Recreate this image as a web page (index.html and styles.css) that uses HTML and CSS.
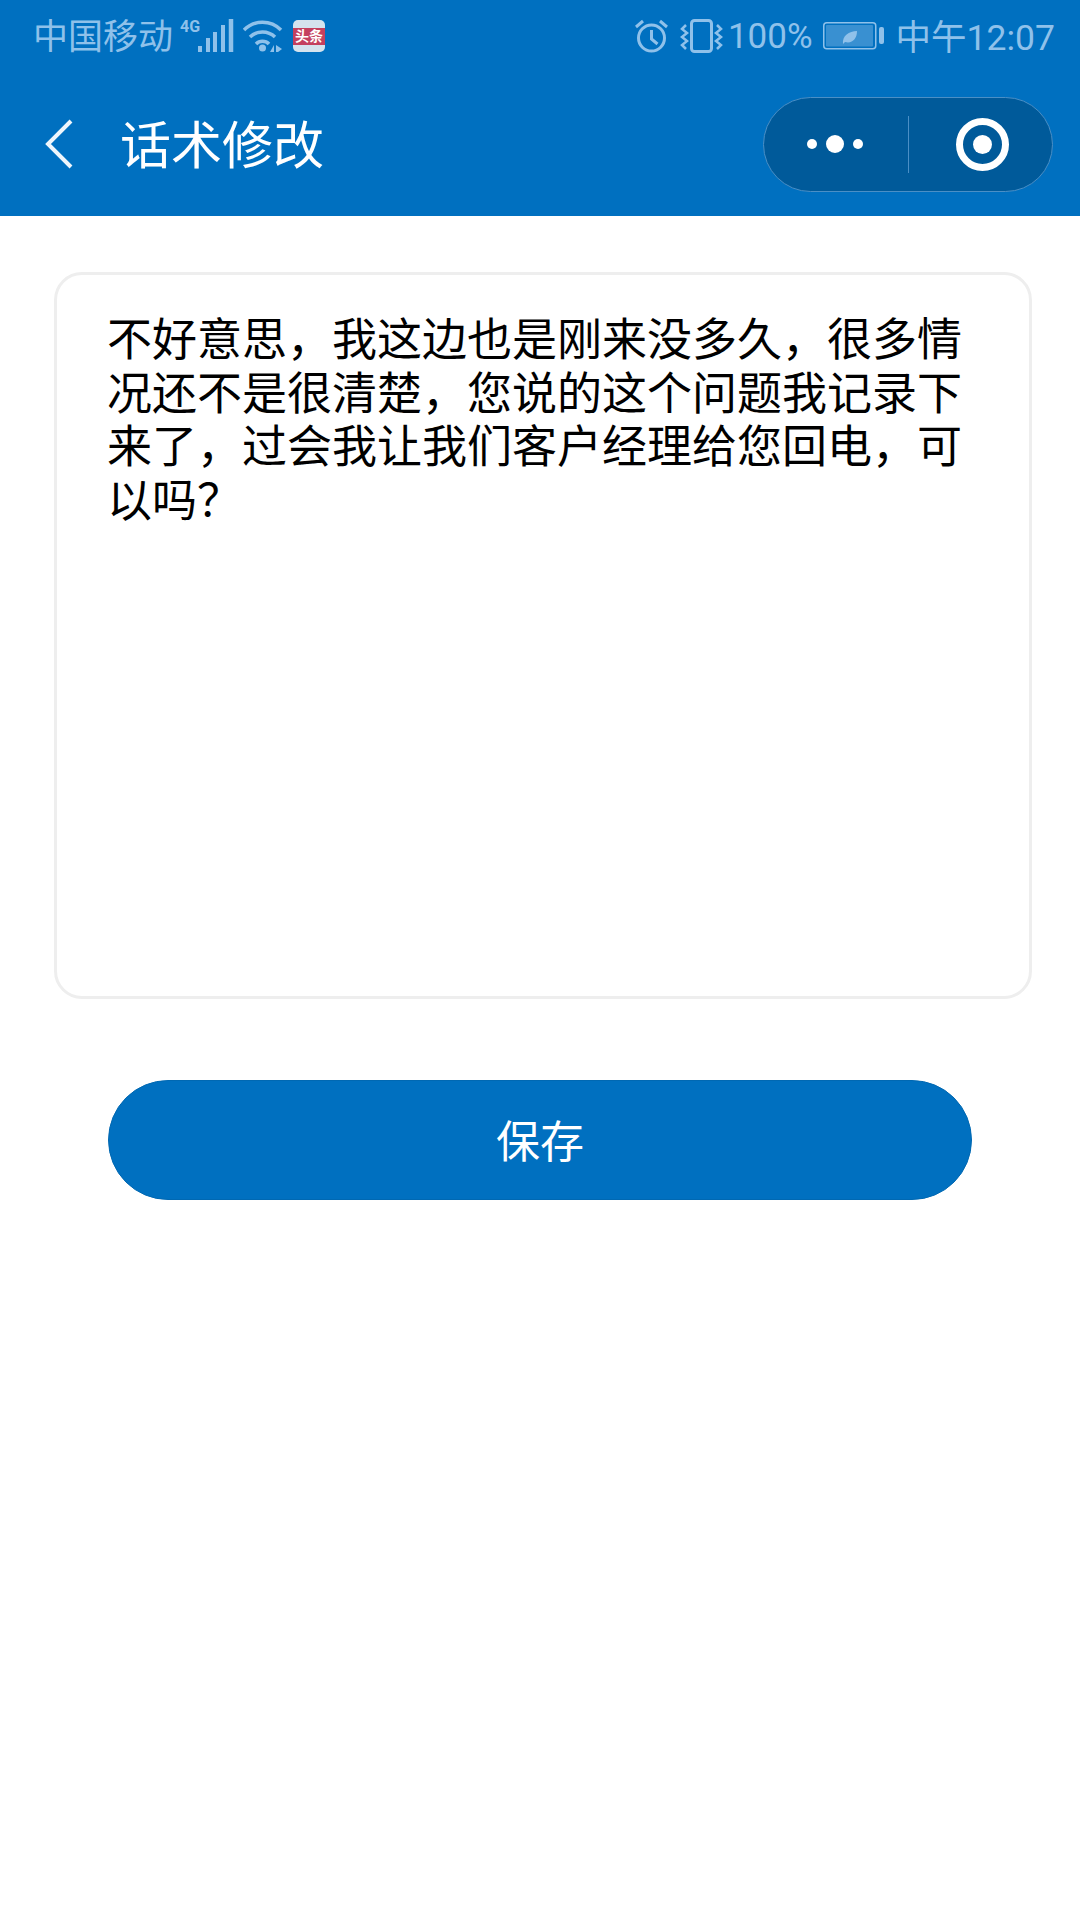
FILE: index.html
```html
<!DOCTYPE html>
<html lang="zh-CN">
<head>
    <meta charset="UTF-8">
    <meta name="viewport" content="width=device-width, initial-scale=1.0">
    <title>话术修改</title>
    <link rel="stylesheet" href="styles.css">
</head>
<body>

    <!-- Status Bar + Nav -->
    <header class="top">
        <div class="status-bar">
            <div class="status-left">
                <span class="carrier">中国移动</span>
                <svg class="ic-signal" width="54" height="36" viewBox="0 0 54 36">
                    <text class="net-text" x="0" y="14">4G</text>
                    <g fill="none" stroke="currentColor" stroke-width="4">
                        <path d="M20 28v6"/>
                        <path d="M28 20v14"/>
                        <path d="M35 14v20"/>
                        <path d="M43 7v27"/>
                        <path d="M51 1v33" stroke-width="4.5"/>
                    </g>
                </svg>
                <svg class="ic-wifi" width="40" height="36" viewBox="0 0 40 36">
                    <g fill="none" stroke="currentColor" stroke-width="3.5">
                        <path d="M1 12a26 26 0 0 1 37 0"/>
                        <path d="M7 19a18 18 0 0 1 25 0"/>
                        <path d="M13 26a9 9 0 0 1 13 0"/>
                    </g>
                    <circle cx="19.5" cy="30" r="3.5" fill="currentColor"/>
                    <path d="M27 34l4-7v7zM33 27l6 4-4 3h-2z" fill="currentColor"/>
                </svg>
                <div class="app-badge"><span>头条</span></div>
            </div>
            <div class="status-right">
                <svg class="ic-alarm" width="33" height="36" viewBox="0 0 33 36">
                    <g fill="none" stroke="currentColor" stroke-width="3">
                        <circle cx="16.5" cy="20" r="13"/>
                        <path d="M16.5 12v9l6 5"/>
                        <path d="M1 9l7-6M32 9l-7-6"/>
                    </g>
                </svg>
                <svg class="ic-vibrate" width="43" height="36" viewBox="0 0 43 36">
                    <rect x="11.5" y="2.5" width="20" height="31" rx="3" fill="none" stroke="currentColor" stroke-width="3"/>
                    <path d="M6 7L2 11l5 4-5 4 5 4-5 4 4 4M37 7l4 4-5 4 5 4-5 4 5 4-4 4" fill="none" stroke="currentColor" stroke-width="2.5"/>
                </svg>
                <span class="percent">100%</span>
                <svg class="ic-battery" width="61" height="30" viewBox="0 0 61 30">
                    <rect x="0.75" y="1.75" width="52" height="26" rx="3" fill="none" stroke="currentColor" stroke-width="1.5"/>
                    <rect x="3" y="4" width="47" height="21.5" rx="1" fill="currentColor" opacity="0.4"/>
                    <path d="M20 23c-1-8 6-13 14-13 0 8-5 13-12 11z" fill="currentColor"/>
                    <rect x="56" y="6" width="5" height="17" rx="2" fill="currentColor"/>
                </svg>
                <span class="clock">中午12:07</span>
            </div>
        </div>

        <nav class="nav-bar">
            <svg class="back" width="30" height="52" viewBox="0 0 30 52">
                <path d="M27 3L4 26l23 23" fill="none" stroke="#eef6fc" stroke-width="4"/>
            </svg>
            <h1 class="nav-title">话术修改</h1>
            <div class="capsule">
                <div class="capsule-dots">
                    <i class="dot"></i><i class="dot dot-big"></i><i class="dot"></i>
                </div>
                <div class="capsule-line"></div>
                <div class="capsule-close"><i class="ring"></i></div>
            </div>
        </nav>
    </header>

    <!-- Edit Form -->
    <main class="content">
        <div class="text-box">不好意思，我这边也是刚来没多久，很多情况还不是很清楚，您说的这个问题我记录下来了，过会我让我们客户经理给您回电，可以吗？</div>
        <button class="save-btn">保存</button>
    </main>

</body>
</html>
```

FILE: styles.css
```css
/* General Styling */
body {
    margin: 0;
    padding: 0;
    width: 1080px;
    height: 1920px;
    overflow: hidden;
    background: #ffffff;
    font-family: "Roboto", "Noto Sans CJK SC", sans-serif;
}

/* Header */
.top {
    height: 216px;
    background: #0070c0;
    color: #fff;
}

.status-bar {
    height: 72px;
    padding: 0 25px 0 33px;
    display: flex;
    justify-content: space-between;
    align-items: center;
    color: #8fc1ea;
    font-size: 35px;
}

.status-left,
.status-right {
    display: flex;
    align-items: center;
}

.carrier {
    font-size: 35px;
    line-height: 70px;
    padding-top: 3px;
}

.ic-signal {
    margin-left: 7px;
}

.net-text {
    font-size: 16px;
    font-weight: 700;
    fill: currentColor;
}

.ic-wifi {
    margin-left: 9px;
}

.app-badge {
    width: 32px;
    height: 32px;
    margin-left: 10px;
    border-radius: 5px;
    background: #d5e3ee;
    display: flex;
    align-items: center;
}

.app-badge span {
    flex: 1;
    height: 17px;
    background: #c4405e;
    color: #fff;
    font-size: 14px;
    line-height: 17px;
    text-align: center;
    font-weight: 700;
}

.ic-vibrate {
    margin-left: 12px;
}

.percent {
    margin-left: 5px;
    line-height: 70px;
    padding-top: 1px;
}

.ic-battery {
    margin-left: 10px;
}

.clock {
    margin-left: 12px;
    font-size: 35.5px;
    line-height: 70px;
    padding-top: 3px;
}

/* Nav */
.nav-bar {
    height: 144px;
    padding: 0 27px 0 44px;
    display: flex;
    align-items: center;
}

.back {
    flex-shrink: 0;
}

.nav-title {
    margin: 0 0 4px 46px;
    flex: 1;
    font-size: 51px;
    font-weight: 400;
    color: #fff;
}

.capsule {
    width: 290px;
    height: 95px;
    box-sizing: border-box;
    border: 1px solid #4a8fc6;
    border-radius: 48px;
    background: #005a9a;
    display: flex;
    align-items: center;
}

.capsule-dots {
    width: 144px;
    padding-right: 2px;
    box-sizing: border-box;
    display: flex;
    justify-content: center;
    align-items: center;
    gap: 9px;
}

.dot {
    width: 10px;
    height: 10px;
    border-radius: 50%;
    background: #fff;
}

.dot-big {
    width: 18px;
    height: 18px;
}

.capsule-line {
    width: 1px;
    height: 57px;
    background: #4a8fc6;
}

.capsule-close {
    flex: 1;
    display: flex;
    justify-content: center;
    align-items: center;
    padding-left: 4px;
}

.ring {
    width: 53px;
    height: 53px;
    box-sizing: border-box;
    border: 7px solid #fff;
    border-radius: 50%;
    display: flex;
    justify-content: center;
    align-items: center;
}

.ring::after {
    content: "";
    width: 19px;
    height: 19px;
    border-radius: 50%;
    background: #fff;
}

/* Form */
.content {
    padding: 56px 48px 0 54px;
}

.text-box {
    height: 727px;
    box-sizing: border-box;
    padding: 35px 50px;
    border: 3px solid #eeeeee;
    border-radius: 28px;
    font-family: "Noto Sans CJK SC", sans-serif;
    font-size: 45px;
    line-height: 53.5px;
    color: #000;
}

.save-btn {
    display: block;
    width: 864px;
    height: 120px;
    margin: 81px 0 0 54px;
    border: 1px solid #0068b2;
    border-radius: 60px;
    background: #0070c0;
    color: #fff;
    font-family: inherit;
    font-size: 44px;
    padding-bottom: 4px;
}
```
